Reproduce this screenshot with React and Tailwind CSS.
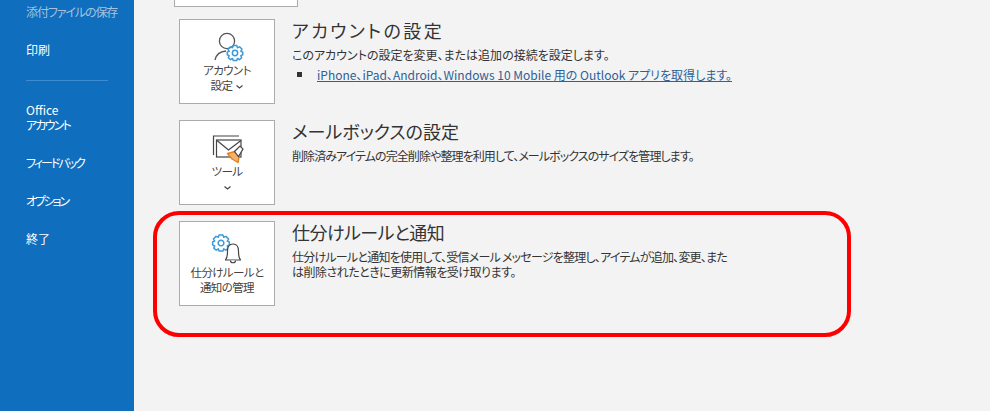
import React from 'react';

const jp = "font-['Noto_Sans_CJK_JP','Noto_Sans',sans-serif] [font-feature-settings:'palt']";

const Gear = ({ x, y, r = 1, color = '#3b9ad9' }) => (
  <g transform={`translate(${x} ${y}) scale(${r})`} fill="none" stroke={color} strokeWidth={1.5 / r} strokeLinejoin="round">
    <path d="M-2 -8.5 L2 -8.5 L2.8 -6 L5.2 -7 L8 -4.2 L6.6 -2 L8.8 -1 L8.8 2 L6.6 3 L7.6 5.4 L5 7.6 L2.8 6.2 L2 8.5 L-2 8.5 L-2.8 6.2 L-5 7.6 L-7.6 5.4 L-6.6 3 L-8.8 2 L-8.8 -1 L-6.6 -2 L-8 -4.2 L-5.2 -7 L-2.8 -6 Z" />
    <circle cx="0" cy="0" r="3" />
  </g>
);

const AccountIcon = () => (
  <svg width="34" height="32" viewBox="0 0 34 32" className="block">
    <circle cx="17" cy="10" r="7.6" fill="none" stroke="#555" strokeWidth="1.3" />
    <path d="M5 29 C6 24 10 20.5 16 20" fill="none" stroke="#555" strokeWidth="1.3" />
    <Gear x={25} y={22} r={0.88} />
  </svg>
);

const ToolsIcon = () => (
  <svg width="34" height="32" viewBox="0 0 34 32" className="block">
    <path d="M3.5 23 L3.5 4 L29 4" fill="none" stroke="#444" strokeWidth="1.2" />
    <rect x="6.5" y="8" width="24.5" height="17" fill="#fff" stroke="#444" strokeWidth="1.2" />
    <path d="M7 8.5 L18.5 18 L31 8.5" fill="none" stroke="#444" strokeWidth="1.2" />
    <path d="M17.5 21.5 L25 19.5 L29 25 L28 30.5 L22 27 Z" fill="#f5b26b" stroke="#e5801c" strokeWidth="1.4" strokeLinejoin="round" />
    <path d="M24.5 19.5 L30 14 L33 17 L28.5 24.5 Z" fill="#fff" stroke="#444" strokeWidth="1.2" />
  </svg>
);

const RulesIcon = () => (
  <svg width="40" height="32" viewBox="0 0 40 32" className="block">
    <Gear x={14} y={10} r={0.95} />
    <path d="M18.5 27 L33.5 27 C31.5 25 31.5 22 31.5 18 C31.5 13.5 29.5 11 26 11 C22.5 11 20.5 13.5 20.5 18 C20.5 22 20.5 25 18.5 27 Z" fill="#fff" stroke="#444" strokeWidth="1.2" strokeLinejoin="round" />
    <path d="M23.5 27.5 C23.5 30.5 28.5 30.5 28.5 27.5" fill="#fff" stroke="#444" strokeWidth="1.2" />
  </svg>
);

const Chevron = ({ className = '' }) => (
  <svg width="7" height="4" viewBox="0 0 7 4" className={className}>
    <path d="M0.5 0.5 L3.5 3 L6.5 0.5" fill="none" stroke="#444" strokeWidth="1.1" />
  </svg>
);

const ActionBox = ({ icon, children }) => (
  <div className="w-[96px] h-[85px] shrink-0 bg-white border border-[#ababab] flex flex-col items-center pt-[11px] text-[11.5px] leading-[15px] tracking-[-0.6px] text-[#444]">
    <div className="h-[32px] flex items-center justify-center">{icon}</div>
    <div className="text-center">{children}</div>
  </div>
);

const Section = ({ box, title, titleClass = '', children }) => (
  <div className="flex">
    {box}
    <div className="ml-[17px] -mt-[2px]">
      <h2 className={`text-[18px] leading-[26px] font-normal text-[#333] ${titleClass}`}>{title}</h2>
      <div className="text-[12px] leading-[15px] text-[#333] mt-[4px]">{children}</div>
    </div>
  </div>
);

const NavItem = ({ children, className = '' }) => (
  <div className={`pl-[26px] text-[12px] leading-[15px] ${className}`}>{children}</div>
);

export default function App() {
  return (
    <div className={`relative w-[990px] h-[411px] overflow-hidden flex bg-[#f3f3f3] ${jp}`}>
      <aside className="w-[134px] h-full bg-[#106ebe] text-white shrink-0 pt-[4px]">
        <NavItem className="text-[#a5c3de] tracking-[-1.1px]">添付ファイルの保存</NavItem>
        <NavItem className="mt-[23px]">印刷</NavItem>
        <div className="ml-[26px] w-[82px] h-px bg-[#3d8bd0] mt-[23px]" />
        <NavItem className="mt-[21px]">Office<br /><span className="tracking-[-1.8px]">アカウント</span></NavItem>
        <NavItem className="mt-[23px] tracking-[-2px]">フィードバック</NavItem>
        <NavItem className="mt-[23px] tracking-[-2.2px]">オプション</NavItem>
        <NavItem className="mt-[23px]">終了</NavItem>
      </aside>

      <main className="flex-1 pl-[45px]">
        <div className="w-[124px] h-[7px] -ml-[5px] bg-white border border-t-0 border-[#ababab] mb-[12px]" />
        <div className="flex flex-col gap-[16px]">
          <Section
            title="アカウントの設定"
            titleClass="tracking-[2.4px]"
            box={
              <ActionBox icon={<AccountIcon />}>
                アカウント<br />設定 <Chevron className="inline ml-[2px] align-middle" />
              </ActionBox>
            }
          >
            <p>このアカウントの設定を変更、または追加の接続を設定します。</p>
            <div className="flex items-center mt-[5px]">
              <span className="w-[5px] h-[5px] bg-[#333] ml-[5px] mr-[15px]" />
              <a href="#" className="underline text-[#2f6096]">iPhone、iPad、Android、Windows 10 Mobile 用の Outlook アプリを取得します。</a>
            </div>
          </Section>

          <Section
            title="メールボックスの設定"
            box={
              <ActionBox icon={<ToolsIcon />}>
                ツール<br /><Chevron className="inline" />
              </ActionBox>
            }
          >
            <p className="tracking-[-0.92px]">削除済みアイテムの完全削除や整理を利用して、メールボックスのサイズを管理します。</p>
          </Section>

          <Section
            title="仕分けルールと通知"
            titleClass="tracking-[-0.5px]"
            box={
              <ActionBox icon={<RulesIcon />}>
                仕分けルールと<br />通知の管理
              </ActionBox>
            }
          >
            <p className="tracking-[-0.77px]">仕分けルールと通知を使用して、受信メール メッセージを整理し、アイテムが追加、変更、また</p>
            <p className="tracking-[-0.5px]">は削除されたときに更新情報を受け取ります。</p>
          </Section>
        </div>
      </main>

      <div className="absolute left-[153px] top-[211px] w-[698px] h-[126px] border-[4px] border-[#ff0000] rounded-[26px] pointer-events-none" />
    </div>
  );
}
